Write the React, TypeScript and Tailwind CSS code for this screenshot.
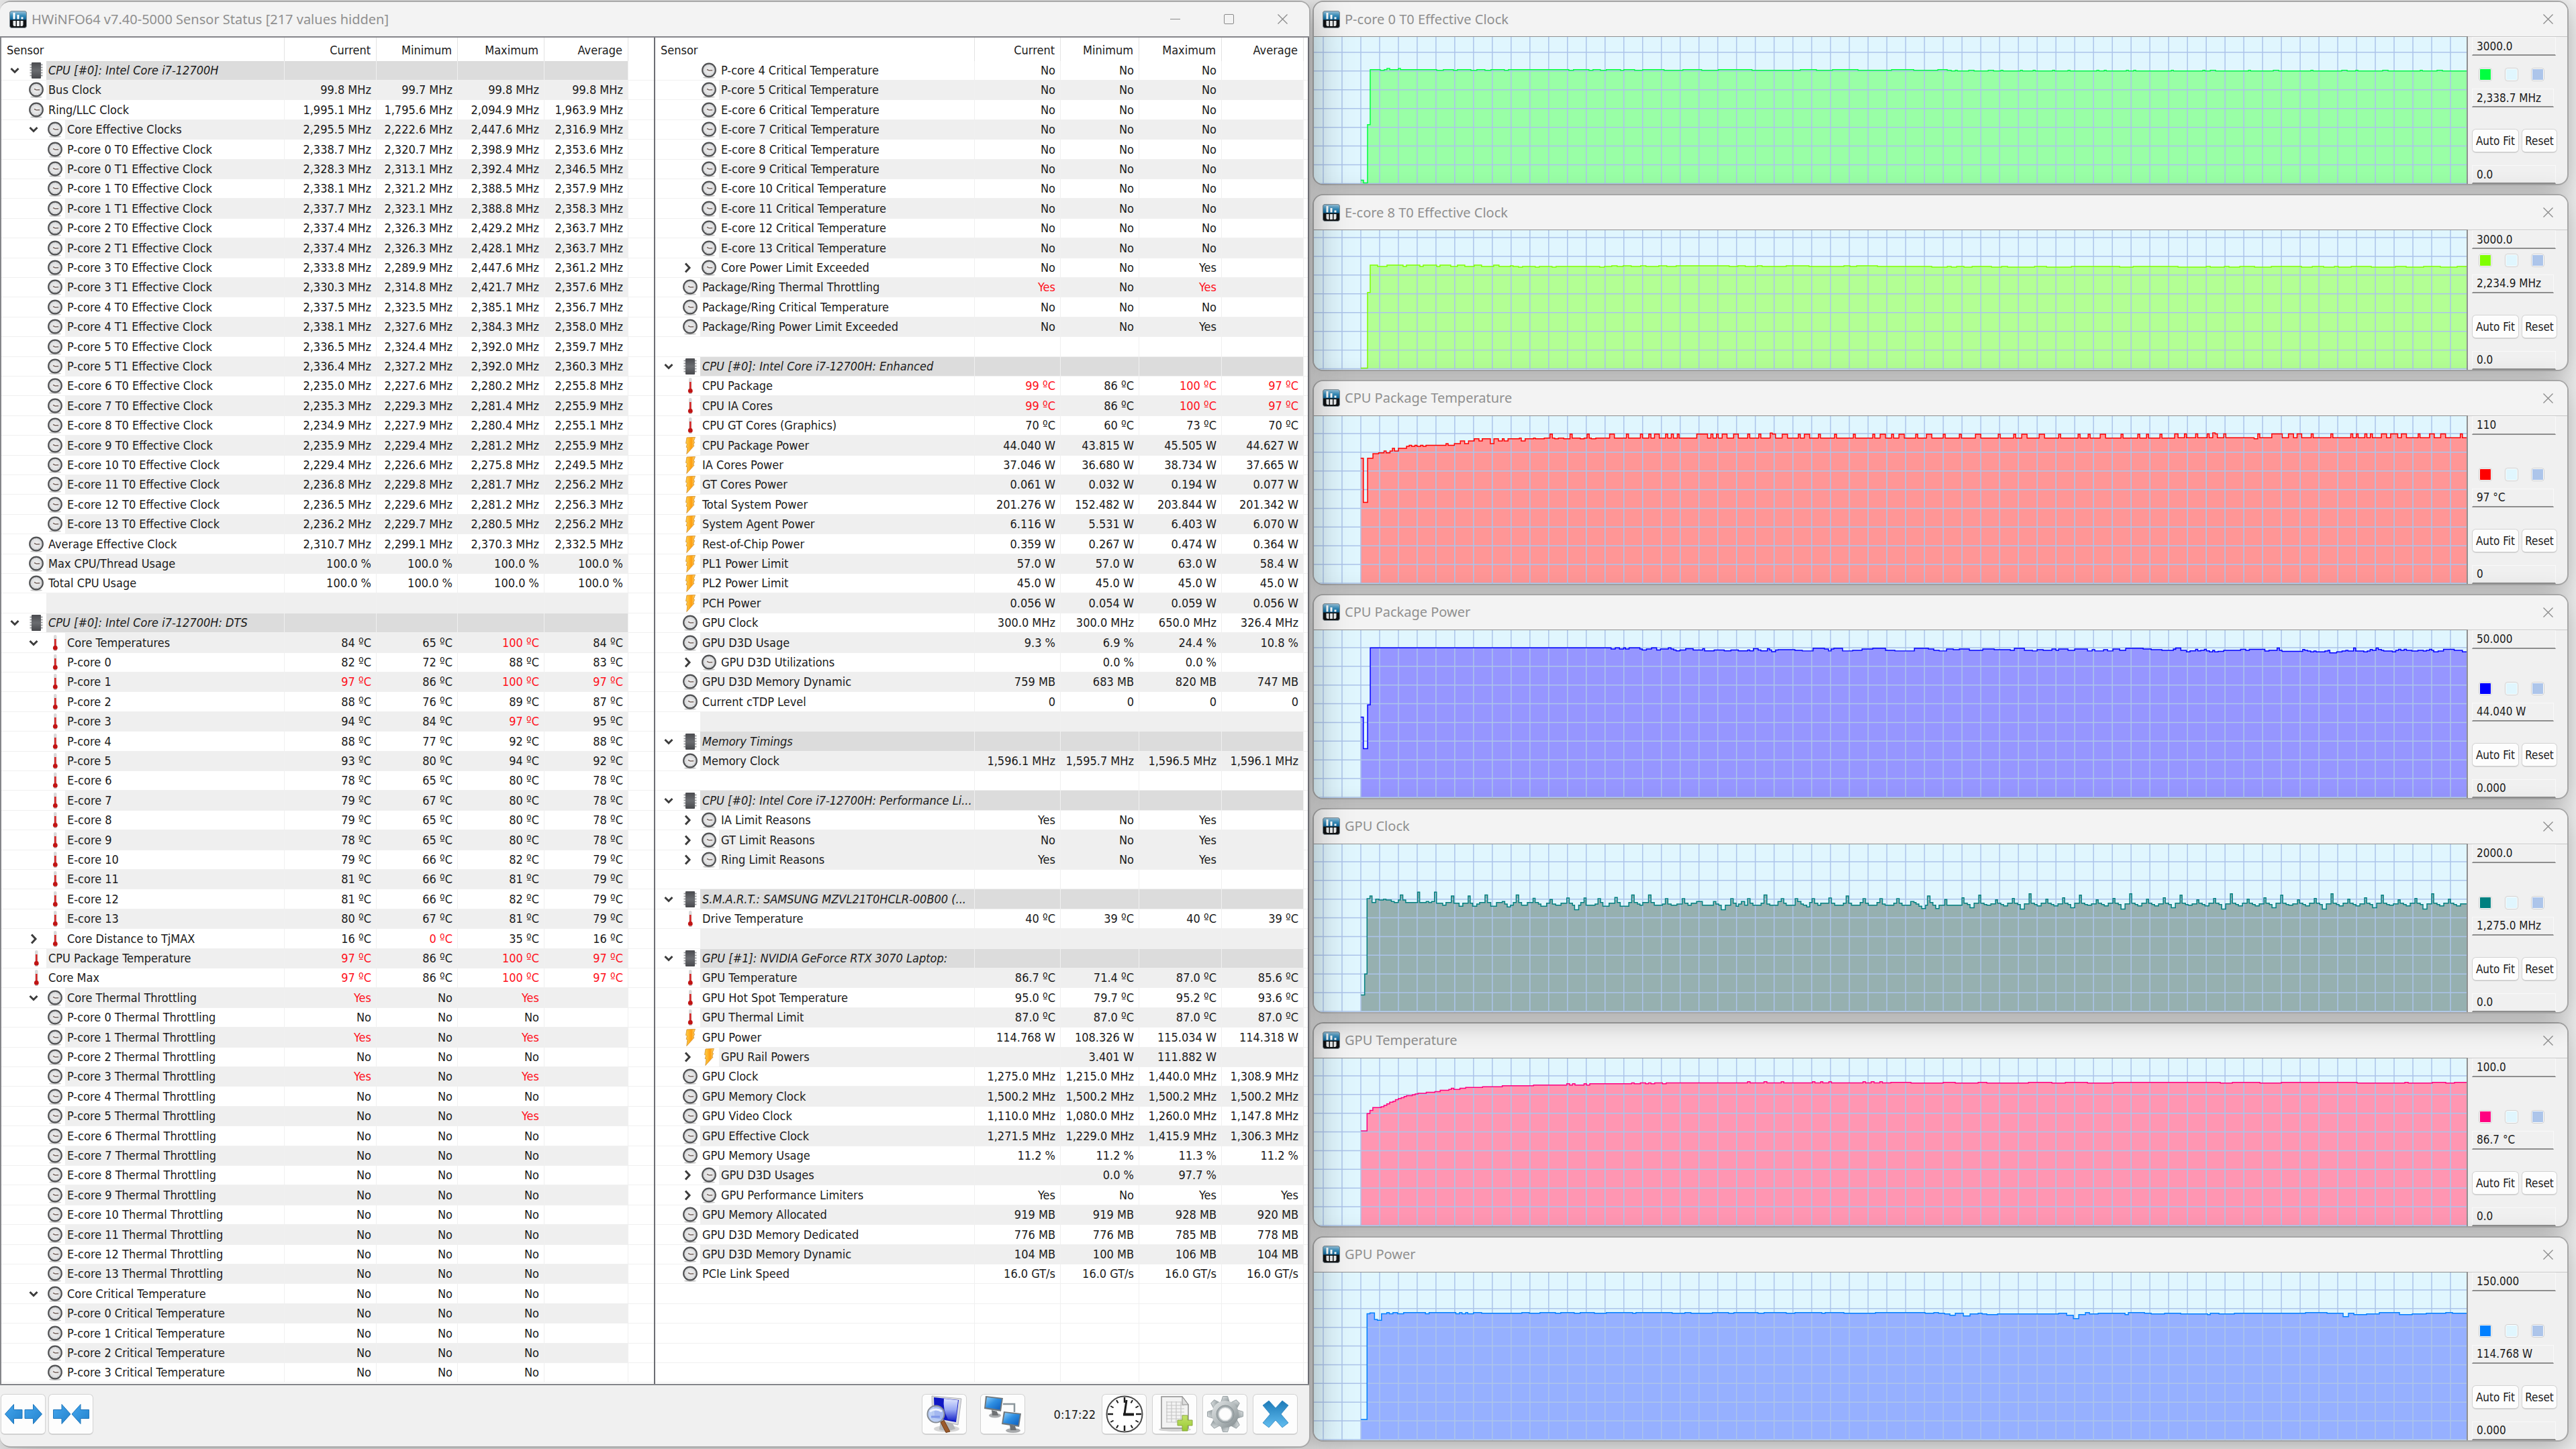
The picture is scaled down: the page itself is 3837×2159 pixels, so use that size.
import React from "react";

/* ------------------------------------------------------------------ data */

/* Row format: level, icon, expander | label | current | minimum | maximum | average
   icon: c = clock, t = thermometer, p = power, h = section header
   expander: v = open, > = closed, - = none; a leading "!" marks an alarm value */
const LEFT_ROWS = `
0hv|CPU [#0]: Intel Core i7-12700H
1c-|Bus Clock|99.8 MHz|99.7 MHz|99.8 MHz|99.8 MHz
1c-|Ring/LLC Clock|1,995.1 MHz|1,795.6 MHz|2,094.9 MHz|1,963.9 MHz
2cv|Core Effective Clocks|2,295.5 MHz|2,222.6 MHz|2,447.6 MHz|2,316.9 MHz
2c-|P-core 0 T0 Effective Clock|2,338.7 MHz|2,320.7 MHz|2,398.9 MHz|2,353.6 MHz
2c-|P-core 0 T1 Effective Clock|2,328.3 MHz|2,313.1 MHz|2,392.4 MHz|2,346.5 MHz
2c-|P-core 1 T0 Effective Clock|2,338.1 MHz|2,321.2 MHz|2,388.5 MHz|2,357.9 MHz
2c-|P-core 1 T1 Effective Clock|2,337.7 MHz|2,323.1 MHz|2,388.8 MHz|2,358.3 MHz
2c-|P-core 2 T0 Effective Clock|2,337.4 MHz|2,326.3 MHz|2,429.2 MHz|2,363.7 MHz
2c-|P-core 2 T1 Effective Clock|2,337.4 MHz|2,326.3 MHz|2,428.1 MHz|2,363.7 MHz
2c-|P-core 3 T0 Effective Clock|2,333.8 MHz|2,289.9 MHz|2,447.6 MHz|2,361.2 MHz
2c-|P-core 3 T1 Effective Clock|2,330.3 MHz|2,314.8 MHz|2,421.7 MHz|2,357.6 MHz
2c-|P-core 4 T0 Effective Clock|2,337.5 MHz|2,323.5 MHz|2,385.1 MHz|2,356.7 MHz
2c-|P-core 4 T1 Effective Clock|2,338.1 MHz|2,327.6 MHz|2,384.3 MHz|2,358.0 MHz
2c-|P-core 5 T0 Effective Clock|2,336.5 MHz|2,324.4 MHz|2,392.0 MHz|2,359.7 MHz
2c-|P-core 5 T1 Effective Clock|2,336.4 MHz|2,327.2 MHz|2,392.0 MHz|2,360.3 MHz
2c-|E-core 6 T0 Effective Clock|2,235.0 MHz|2,227.6 MHz|2,280.2 MHz|2,255.8 MHz
2c-|E-core 7 T0 Effective Clock|2,235.3 MHz|2,229.3 MHz|2,281.4 MHz|2,255.9 MHz
2c-|E-core 8 T0 Effective Clock|2,234.9 MHz|2,227.9 MHz|2,280.4 MHz|2,255.1 MHz
2c-|E-core 9 T0 Effective Clock|2,235.9 MHz|2,229.4 MHz|2,281.2 MHz|2,255.9 MHz
2c-|E-core 10 T0 Effective Clock|2,229.4 MHz|2,226.6 MHz|2,275.8 MHz|2,249.5 MHz
2c-|E-core 11 T0 Effective Clock|2,236.8 MHz|2,229.8 MHz|2,281.7 MHz|2,256.2 MHz
2c-|E-core 12 T0 Effective Clock|2,236.5 MHz|2,229.6 MHz|2,281.2 MHz|2,256.3 MHz
2c-|E-core 13 T0 Effective Clock|2,236.2 MHz|2,229.7 MHz|2,280.5 MHz|2,256.2 MHz
1c-|Average Effective Clock|2,310.7 MHz|2,299.1 MHz|2,370.3 MHz|2,332.5 MHz
1c-|Max CPU/Thread Usage|100.0 %|100.0 %|100.0 %|100.0 %
1c-|Total CPU Usage|100.0 %|100.0 %|100.0 %|100.0 %
---
0hv|CPU [#0]: Intel Core i7-12700H: DTS
2tv|Core Temperatures|84 ºC|65 ºC|!100 ºC|84 ºC
2t-|P-core 0|82 ºC|72 ºC|88 ºC|83 ºC
2t-|P-core 1|!97 ºC|86 ºC|!100 ºC|!97 ºC
2t-|P-core 2|88 ºC|76 ºC|89 ºC|87 ºC
2t-|P-core 3|94 ºC|84 ºC|!97 ºC|95 ºC
2t-|P-core 4|88 ºC|77 ºC|92 ºC|88 ºC
2t-|P-core 5|93 ºC|80 ºC|94 ºC|92 ºC
2t-|E-core 6|78 ºC|65 ºC|80 ºC|78 ºC
2t-|E-core 7|79 ºC|67 ºC|80 ºC|78 ºC
2t-|E-core 8|79 ºC|65 ºC|80 ºC|78 ºC
2t-|E-core 9|78 ºC|65 ºC|80 ºC|78 ºC
2t-|E-core 10|79 ºC|66 ºC|82 ºC|79 ºC
2t-|E-core 11|81 ºC|66 ºC|81 ºC|79 ºC
2t-|E-core 12|81 ºC|66 ºC|82 ºC|79 ºC
2t-|E-core 13|80 ºC|67 ºC|81 ºC|79 ºC
2t>|Core Distance to TjMAX|16 ºC|!0 ºC|35 ºC|16 ºC
1t-|CPU Package Temperature|!97 ºC|86 ºC|!100 ºC|!97 ºC
1t-|Core Max|!97 ºC|86 ºC|!100 ºC|!97 ºC
2cv|Core Thermal Throttling|!Yes|No|!Yes|
2c-|P-core 0 Thermal Throttling|No|No|No|
2c-|P-core 1 Thermal Throttling|!Yes|No|!Yes|
2c-|P-core 2 Thermal Throttling|No|No|No|
2c-|P-core 3 Thermal Throttling|!Yes|No|!Yes|
2c-|P-core 4 Thermal Throttling|No|No|No|
2c-|P-core 5 Thermal Throttling|No|No|!Yes|
2c-|E-core 6 Thermal Throttling|No|No|No|
2c-|E-core 7 Thermal Throttling|No|No|No|
2c-|E-core 8 Thermal Throttling|No|No|No|
2c-|E-core 9 Thermal Throttling|No|No|No|
2c-|E-core 10 Thermal Throttling|No|No|No|
2c-|E-core 11 Thermal Throttling|No|No|No|
2c-|E-core 12 Thermal Throttling|No|No|No|
2c-|E-core 13 Thermal Throttling|No|No|No|
2cv|Core Critical Temperature|No|No|No|
2c-|P-core 0 Critical Temperature|No|No|No|
2c-|P-core 1 Critical Temperature|No|No|No|
2c-|P-core 2 Critical Temperature|No|No|No|
2c-|P-core 3 Critical Temperature|No|No|No|`;

const RIGHT_ROWS = `
2c-|P-core 4 Critical Temperature|No|No|No|
2c-|P-core 5 Critical Temperature|No|No|No|
2c-|E-core 6 Critical Temperature|No|No|No|
2c-|E-core 7 Critical Temperature|No|No|No|
2c-|E-core 8 Critical Temperature|No|No|No|
2c-|E-core 9 Critical Temperature|No|No|No|
2c-|E-core 10 Critical Temperature|No|No|No|
2c-|E-core 11 Critical Temperature|No|No|No|
2c-|E-core 12 Critical Temperature|No|No|No|
2c-|E-core 13 Critical Temperature|No|No|No|
2c>|Core Power Limit Exceeded|No|No|Yes|
1c-|Package/Ring Thermal Throttling|!Yes|No|!Yes|
1c-|Package/Ring Critical Temperature|No|No|No|
1c-|Package/Ring Power Limit Exceeded|No|No|Yes|
---
0hv|CPU [#0]: Intel Core i7-12700H: Enhanced
1t-|CPU Package|!99 ºC|86 ºC|!100 ºC|!97 ºC
1t-|CPU IA Cores|!99 ºC|86 ºC|!100 ºC|!97 ºC
1t-|CPU GT Cores (Graphics)|70 ºC|60 ºC|73 ºC|70 ºC
1p-|CPU Package Power|44.040 W|43.815 W|45.505 W|44.627 W
1p-|IA Cores Power|37.046 W|36.680 W|38.734 W|37.665 W
1p-|GT Cores Power|0.061 W|0.032 W|0.194 W|0.077 W
1p-|Total System Power|201.276 W|152.482 W|203.844 W|201.342 W
1p-|System Agent Power|6.116 W|5.531 W|6.403 W|6.070 W
1p-|Rest-of-Chip Power|0.359 W|0.267 W|0.474 W|0.364 W
1p-|PL1 Power Limit|57.0 W|57.0 W|63.0 W|58.4 W
1p-|PL2 Power Limit|45.0 W|45.0 W|45.0 W|45.0 W
1p-|PCH Power|0.056 W|0.054 W|0.059 W|0.056 W
1c-|GPU Clock|300.0 MHz|300.0 MHz|650.0 MHz|326.4 MHz
1c-|GPU D3D Usage|9.3 %|6.9 %|24.4 %|10.8 %
2c>|GPU D3D Utilizations||0.0 %|0.0 %|
1c-|GPU D3D Memory Dynamic|759 MB|683 MB|820 MB|747 MB
1c-|Current cTDP Level|0|0|0|0
---
0hv|Memory Timings
1c-|Memory Clock|1,596.1 MHz|1,595.7 MHz|1,596.5 MHz|1,596.1 MHz
---
0hv|CPU [#0]: Intel Core i7-12700H: Performance Li...
2c>|IA Limit Reasons|Yes|No|Yes|
2c>|GT Limit Reasons|No|No|Yes|
2c>|Ring Limit Reasons|Yes|No|Yes|
---
0hv|S.M.A.R.T.: SAMSUNG MZVL21T0HCLR-00B00 (...
1t-|Drive Temperature|40 ºC|39 ºC|40 ºC|39 ºC
---
0hv|GPU [#1]: NVIDIA GeForce RTX 3070 Laptop:
1t-|GPU Temperature|86.7 ºC|71.4 ºC|87.0 ºC|85.6 ºC
1t-|GPU Hot Spot Temperature|95.0 ºC|79.7 ºC|95.2 ºC|93.6 ºC
1t-|GPU Thermal Limit|87.0 ºC|87.0 ºC|87.0 ºC|87.0 ºC
1p-|GPU Power|114.768 W|108.326 W|115.034 W|114.318 W
2p>|GPU Rail Powers||3.401 W|111.882 W|
1c-|GPU Clock|1,275.0 MHz|1,215.0 MHz|1,440.0 MHz|1,308.9 MHz
1c-|GPU Memory Clock|1,500.2 MHz|1,500.2 MHz|1,500.2 MHz|1,500.2 MHz
1c-|GPU Video Clock|1,110.0 MHz|1,080.0 MHz|1,260.0 MHz|1,147.8 MHz
1c-|GPU Effective Clock|1,271.5 MHz|1,229.0 MHz|1,415.9 MHz|1,306.3 MHz
1c-|GPU Memory Usage|11.2 %|11.2 %|11.3 %|11.2 %
2c>|GPU D3D Usages||0.0 %|97.7 %|
2c>|GPU Performance Limiters|Yes|No|Yes|Yes
1c-|GPU Memory Allocated|919 MB|919 MB|928 MB|920 MB
1c-|GPU D3D Memory Dedicated|776 MB|776 MB|785 MB|778 MB
1c-|GPU D3D Memory Dynamic|104 MB|100 MB|106 MB|104 MB
1c-|PCIe Link Speed|16.0 GT/s|16.0 GT/s|16.0 GT/s|16.0 GT/s
===
===
===
===
===`;

type Row = { level: number; icon: string; expander: string; label: string; values: string[] };

function parseRows(source: string): Row[] {
  return source
    .trim()
    .split("\n")
    .map((line) => {
      if (line === "---" || line === "===")
        return { level: 1, icon: "", expander: "-", label: "", values: ["", "", "", ""] };
      const [head, label, ...rest] = line.split("|");
      return {
        level: Number(head[0]),
        icon: head[1],
        expander: head[2],
        label,
        values: [0, 1, 2, 3].map((i) => rest[i] ?? ""),
      };
    });
}

/* ----------------------------------------------------------- chart series */

type Point = [number, number];

/* "x,y x,y ..." measured in sample units, converted to plot units. */
function samples(source: string, originX: number, originY: number, unit: number): Point[] {
  return source
    .trim()
    .split(/\s+/)
    .map((pair) => {
      const [x, y] = pair.split(",").map(Number);
      return [x / unit + originX, (y - originY) / unit];
    });
}

function wander(from: number, to: number, pick: (r: number, x: number) => number, seed: number, minStep = 4, spread = 20): Point[] {
  const out: Point[] = [];
  let s = seed;
  const rnd = () => {
    s = (s * 1103515245 + 12345) % 2147483648;
    return s / 2147483648;
  };
  let x = from;
  while (x < to) {
    out.push([x, pick(rnd(), x)]);
    x += minStep + Math.floor(rnd() * spread);
  }
  return out;
}

/* Narrow pulses from a low level to a high one. */
function pulses(from: number, to: number, base: number, high: number, seed: number, gap: number): Point[] {
  const out: Point[] = [[from, base]];
  let s = seed;
  const rnd = () => {
    s = (s * 1103515245 + 12345) % 2147483648;
    return s / 2147483648;
  };
  let x = from + 6;
  while (x < to - 12) {
    const w = rnd() > 0.7 ? 8 : 3;
    out.push([x, high], [x + w, base]);
    x += w + 5 + Math.floor(rnd() * gap);
  }
  return out;
}

const PLOT_WIDTH = 1718;

const greenSeries: Point[] = [
  [70, 214], [74, 218], [80, 131], [84, 49], [99, 50], [105, 49], [109, 47], [113, 49], [126, 47], [129, 49],
  [183, 50], [193, 49], [208, 50], [214, 49], [234, 50], [243, 49], [255, 50], [264, 49], [284, 50], [290, 49],
  [380, 50], [387, 49], [410, 50], [416, 49], [427, 50], [436, 49], [457, 50], [462, 49], [478, 50],
  ...wander(490, 950, (r) => (r > 0.5 ? 49 : 50), 11, 5, 34),
  ...pulses(950, 1718, 51, 50, 5, 50),
];

const limeSeries: Point[] = [
  [70, 206], [80, 93], [84, 52], [95, 54], [109, 52], [133, 54], [138, 52], [158, 54], [163, 52], [183, 54],
  [188, 52], [204, 54], [214, 52], [225, 54], [239, 52], [250, 54], [268, 52], [276, 54], [293, 53], [297, 54],
  [305, 55], [311, 54], [330, 55], [336, 54], [355, 55], [361, 54], [426, 55], [433, 54], [444, 53], [452, 54],
  [461, 53], [473, 54], [487, 53],
  ...wander(495, 1718, (r, x) => (x > 900 ? 54 : 53) + (r > 0.5 ? 1 : 0), 31, 4, 20),
];

const redSeries: Point[] = [
  ...samples(
    `172,271 181,419 195,271 213,256 232,253 250,247 257,253 270,247 278,238 285,247 298,238 325,231 334,228 342,231
     353,228 360,231 372,228 380,231 390,228 457,222 464,228 485,222 505,213 519,222 532,213 551,206 567,213 578,206
     605,222 617,206 632,213 645,206 651,213 664,206 702,204 708,213 721,206 749,204 755,206 785,204 804,190 812,204
     820,206 832,204 850,206 871,190 878,204 905,206 918,204 928,190 935,204 942,206 957,204 1003,190 1019,204
     1059,190 1066,204 1106,190 1113,204 1134,190 1141,204 1153,190 1169,204 1190,190 1197,204 1209,190 1216,204
     1229,190 1235,204 1294,190 1330,204 1341,190 1348,204 1360,190 1366,204 1379,190 1395,204 1417,190 1433,204
     1464,190 1471,204 1501,190 1508,204 1539,187 1546,190 1557,204`,
    -7, 130, 2.24),
  ...pulses(692, 1283, 33, 27, 17, 22),
  ...samples(
    `0,223 13,238 38,223 46,238 82,223 90,238 127,223 135,238 149,219 158,223 167,238 192,223 200,238 311,242 325,223
     333,238 380,223 421,238 445,223 465,238 479,223 497,238 534,223 542,238 611,223 619,238 689,223 697,238 711,223
     718,238 744,223 752,238 766,223 774,238 809,223 829,238 845,223 873,238 887,223 907,238 953,223 960,238 997,223
     1016,238 1041,223 1060,238 1118,223 1126,238`,
    1283, 153, 2.626),
];

const blueSeries: Point[] = [
  ...samples(
    `172,1137 181,1243 195,1096 204,905 1008,909 1022,905 1036,909 1050,905 1056,909 1068,905 1104,909 1112,912
     1126,909 1143,905 1160,912 1173,909 1199,905 1208,909 1217,912 1225,915 1238,912 1257,908 1282,912 1314,908
     1320,915 1352,912 1386,915 1408,912 1433,915 1464,912 1471,915 1483,908 1499,912 1508,915 1530,908 1537,912
     1544,918 1557,912`,
    -7, 846, 2.24),
  ...wander(692, 1283, (r) => 27 + Math.floor(r * 5), 7, 4, 14),
  ...samples(
    `0,1066 4,1061 24,1070 46,1076 60,1072 82,1066 90,1072 102,1070 116,1066 124,1072 136,1076 149,1070 156,1076
     170,1074 192,1070 258,1066 278,1070 292,1066 353,1073 369,1070 401,1061 410,1070 420,1074 501,1067 509,1070
     520,1073 532,1076 545,1073 553,1076 588,1073 600,1070 607,1080 634,1076 655,1073 670,1070 678,1073 700,1061
     708,1073 740,1076 754,1073 765,1067 774,1070 788,1061 797,1067 809,1070 818,1073 852,1076 865,1070 876,1066
     885,1070 898,1066 907,1070 928,1073 952,1070 973,1073 985,1070 997,1066 1006,1070 1014,1076 1031,1073
     1052,1066 1094,1070 1126,1076`,
    1283, 991, 2.626),
];

/* Sawtooth of the boost clock: a spike followed by a decay, every 25 units. */
function sawtooth(from: number, to: number): Point[] {
  const out: Point[] = [];
  let n = 0;
  for (let x = from; x < to; x += 25) {
    const peak = [80, 76, 83, 81, 74, 82][n % 6];
    const dip = [92, 91, 95, 92, 92, 97][(n * 5 + 2) % 6];
    out.push([x, peak], [x + 3, 88], [x + 8, 90], [x + 12, dip], [x + 18, 88 + (n % 2)]);
    n += 1;
  }
  return out;
}

const tealSeries: Point[] = [
  ...samples(
    `126,462 135,411 141,227 148,220 153,236 162,228 170,230 181,228 187,230 200,234 207,236 217,230 222,218 228,230
     235,236 264,211 269,236 285,234 291,236 298,234 305,211 310,238 325,243 333,236 346,220 352,238 365,245 374,238
     387,220 392,238 398,245 408,240 415,236 428,218 434,236 442,245 456,236 470,234 476,240 482,247 490,243 497,236
     504,218 510,236 517,243 531,236 545,226 550,236 558,240 564,245 578,238 586,229 592,240 600,243 613,238 627,225
     633,238 641,243 646,254 656,243 661,236 669,225 674,243 696,240 703,227 709,236 715,245 730,238 744,224 750,236
     757,245 778,236 785,218 791,236 799,240 805,243 812,236 826,218 832,236 840,243 860,240 867,227 873,240 881,243
     895,240 908,227 914,238 922,243 930,238 943,234 957,243 984,234 990,240 997,243 1003,254 1013,243 1026,227
     1032,238 1039,245 1045,240 1052,234 1060,243 1067,227 1073,238 1080,243 1100,238 1107,218 1114,240 1121,243
     1141,234 1149,227 1155,238 1161,243 1183,227 1189,234 1197,240 1203,243 1211,247 1218,236 1224,227 1230,238
     1238,243 1245,238 1265,225 1271,238 1279,243 1300,238 1307,220 1313,238 1320,243 1341,236 1348,227 1354,238
     1361,243 1382,236 1389,227 1395,240 1402,243 1423,238 1430,227 1436,238 1443,243 1464,234 1472,236 1477,240
     1484,245 1491,251 1500,243 1505,220 1511,236 1518,243 1525,251 1533,243 1547,229 1552,243`,
    -7, 94, 1.633),
  ...sawtooth(966, 1712),
];

const pinkSeries: Point[] = [
  ...samples(
    `126,792 141,750 148,742 155,735 175,733 182,730 189,726 196,722 204,720 210,716 217,713 224,711 231,708 237,706
     251,704 258,702 265,700 285,698 306,696 319,693 340,691 346,688 352,691 367,688 381,686 422,684 470,682 546,680
     627,677 634,680 641,677 647,680 669,677 675,680 683,677 785,675 791,677 806,675 819,677 826,675 832,677 841,675
     860,677 869,675 1067,672 1073,675 1107,672 1114,675 1149,672 1155,675 1225,672 1231,675 1245,672 1250,675
     1265,672 1271,675 1348,672 1354,675 1368,672 1375,675 1389,672 1395,675`,
    -7, 615, 1.633),
  ...wander(860, 1718, (r) => (r > 0.45 ? 36 : 37), 23, 5, 40),
];

const azureSeries: Point[] = [
  ...samples(
    `126,1496 141,1238 148,1236 159,1252 166,1254 176,1238 189,1235 195,1238 204,1235 215,1238 230,1235 283,1238
     292,1235 357,1238 366,1235 372,1238 381,1235 386,1238 400,1235`,
    -7, 1137, 1.633),
  ...wander(250, 940, (r) => (r > 0.45 ? 60 : 61), 41, 4, 22),
  [940, 62], [948, 64], [956, 61], [968, 65], [978, 62], [990, 61],
  ...wander(996, 1120, (r) => 61 + Math.round(r * 2), 3, 4, 16),
  [1122, 64], [1132, 69], [1140, 63], [1150, 60],
  ...wander(1156, 1400, (r) => 60 + Math.round(r * 3), 13, 4, 22),
  ...wander(1404, 1530, (r) => 60 + Math.round(r), 19, 6, 30),
  [1534, 66], [1542, 61],
  ...wander(1550, 1718, (r) => 60 + Math.round(r * 3), 29, 4, 20),
];

type Graph = {
  id: string;
  title: string;
  max: string;
  min: string;
  value: string;
  height: number;
  size: string;
  stroke: string;
  fill: string;
  swatch: string;
  points: Point[];
};

const GRAPHS: Graph[] = [
  { id: "pcore", title: "P-core 0 T0 Effective Clock", max: "3000.0", min: "0.0", value: "2,338.7 MHz", height: 220, size: "grow-[275]", stroke: "#00ff40", fill: "#99ffa6", swatch: "bg-[#00ff40]", points: greenSeries },
  { id: "ecore", title: "E-core 8 T0 Effective Clock", max: "3000.0", min: "0.0", value: "2,234.9 MHz", height: 208, size: "grow-[263]", stroke: "#80ff00", fill: "#b3ff94", swatch: "bg-[#80ff00]", points: limeSeries },
  { id: "cputemp", title: "CPU Package Temperature", max: "110", min: "0", value: "97 °C", height: 251, size: "grow-[306]", stroke: "#ff0000", fill: "#ff9696", swatch: "bg-[#ff0000]", points: redSeries },
  { id: "cpupower", title: "CPU Package Power", max: "50.000", min: "0.000", value: "44.040 W", height: 251, size: "grow-[306]", stroke: "#0000ff", fill: "#9696ff", swatch: "bg-[#0000ff]", points: blueSeries },
  { id: "gpuclock", title: "GPU Clock", max: "2000.0", min: "0.0", value: "1,275.0 MHz", height: 251, size: "grow-[306] z-10", stroke: "#008080", fill: "#96b0b0", swatch: "bg-[#008080]", points: tealSeries },
  { id: "gputemp", title: "GPU Temperature", max: "100.0", min: "0.0", value: "86.7 °C", height: 251, size: "grow-[306]", stroke: "#ff0080", fill: "#ff96b2", swatch: "bg-[#ff0080]", points: pinkSeries },
  { id: "gpupower", title: "GPU Power", max: "150.000", min: "0.000", value: "114.768 W", height: 251, size: "grow-[306]", stroke: "#0080ff", fill: "#96b0ff", swatch: "bg-[#0080ff]", points: azureSeries },
];

/* ------------------------------------------------------------------ icons */

function Gradients() {
  return (
    <svg className="absolute h-0 w-0" aria-hidden="true">
      <defs>
        <linearGradient id="g-logo" x1="0" y1="0" x2="0" y2="1">
          <stop offset="0" stopColor="#9cc3d9" /><stop offset=".5" stopColor="#3b8fbc" /><stop offset="1" stopColor="#0b6296" />
        </linearGradient>
        <linearGradient id="g-chip" x1="0" y1="0" x2="0" y2="1">
          <stop offset="0" stopColor="#4a4b4f" /><stop offset=".5" stopColor="#6a6c70" /><stop offset="1" stopColor="#48494d" />
        </linearGradient>
        <radialGradient id="g-face"><stop offset="0" stopColor="#f2f2f2" /><stop offset="1" stopColor="#d6d7d9" /></radialGradient>
        <linearGradient id="g-bolt" x1="0" y1="0" x2="1" y2="0">
          <stop offset="0" stopColor="#ffd24a" /><stop offset=".6" stopColor="#ff9d10" /><stop offset="1" stopColor="#ffe27a" />
        </linearGradient>
        <linearGradient id="g-arrow" x1="0" y1="0" x2="1" y2="1">
          <stop offset="0" stopColor="#45a6ee" /><stop offset="1" stopColor="#2382cc" />
        </linearGradient>
        <linearGradient id="g-screen" x1="0" y1="0" x2="0" y2="1">
          <stop offset="0" stopColor="#dfe6fd" /><stop offset=".5" stopColor="#98a8f4" /><stop offset="1" stopColor="#1a26c8" />
        </linearGradient>
        <linearGradient id="g-net" x1="0" y1="0" x2="1" y2="1">
          <stop offset="0" stopColor="#8fd0fb" /><stop offset=".45" stopColor="#2f8fe2" /><stop offset="1" stopColor="#0d5cbc" />
        </linearGradient>
        <linearGradient id="g-metal" x1="0" y1="0" x2="1" y2="1">
          <stop offset="0" stopColor="#e3e6e7" /><stop offset=".5" stopColor="#b5bcbe" /><stop offset="1" stopColor="#80898c" />
        </linearGradient>
        <linearGradient id="g-cross" x1="0" y1="0" x2="0" y2="1">
          <stop offset="0" stopColor="#1c7ab8" /><stop offset="1" stopColor="#62bdf0" />
        </linearGradient>
        <linearGradient id="g-plus" x1="0" y1="0" x2="0" y2="1">
          <stop offset="0" stopColor="#c4e36b" /><stop offset="1" stopColor="#97c832" />
        </linearGradient>
      </defs>
    </svg>
  );
}

function LogoIcon() {
  return (
    <svg viewBox="0 0 26 26" className="size-[26px] shrink-0" aria-hidden="true">
      <rect x=".5" y=".5" width="25" height="25" rx="3" fill="#101214" />
      <path d="M.5 13.5V3.500a3 3 0 0 1 3-3h19a3 3 0 0 1 3 3v10z" fill="url(#g-logo)" />
      <rect x=".5" y=".5" width="25" height="25" rx="3" fill="none" stroke="#7f8b92" />
      <path d="M5.500 3h3v9.500h-3zM11.500 6h3v6.500h-3zM17.500 9.500h3v3h-3z" fill="#fff" />
      <path d="M5.500 15h4v8H8q-2.500 0-2.500-2.500zM11 15h4v8h-4zM16.500 15h4v5.500q0 2.500-2.500 2.500h-1.500z" fill="#eceeef" />
    </svg>
  );
}

function SensorIcon({ kind }: { kind: string }) {
  if (kind === "h")
    return (
      <svg viewBox="0 0 24 24" className="size-6 shrink-0" aria-hidden="true">
        <path d="M2.500 3.500h19M2.500 7.500h19M2.500 11.500h19M2.500 15.500h19M2.500 19.500h19" stroke="#9c9da0" strokeWidth="2" />
        <rect x="5" y="0" width="14" height="24" rx="1" fill="url(#g-chip)" />
      </svg>
    );
  if (kind === "c")
    return (
      <svg viewBox="0 0 24 24" className="size-6 shrink-0" aria-hidden="true">
        <ellipse cx="12" cy="22.500" rx="9" ry="1.500" fill="#c8c8c8" />
        <circle cx="12" cy="11.500" r="9.800" fill="url(#g-face)" stroke="#505153" strokeWidth="2.200" />
        <circle cx="12" cy="11.500" r="8" fill="none" stroke="#aeafb1" strokeWidth="1.200" strokeDasharray="1 3" />
        <path d="M9 10.500l3.200 1.400 5-.2" stroke="#77655f" strokeWidth="1.500" fill="none" />
      </svg>
    );
  if (kind === "t")
    return (
      <svg viewBox="0 0 24 24" className="size-6 shrink-0" aria-hidden="true">
        <rect x="10" y="0" width="4.500" height="20" rx="2" fill="#d9d9d9" />
        <rect x="11" y="6" width="2.600" height="13" fill="#d42424" />
        <circle cx="12.300" cy="19.500" r="3.400" fill="#c01414" />
        <ellipse cx="12.300" cy="23.300" rx="2.500" ry=".7" fill="#bbb" />
      </svg>
    );
  if (kind === "p")
    return (
      <svg viewBox="0 0 24 26" className="h-[26px] w-6 shrink-0" aria-hidden="true">
        <path d="M7 1L19.500 .4L17 7l1.600.5-2 4.900 1.500.6L6.800 25.500l1.200-9.700-1.900-.4 1.500-5-2-.8z" fill="url(#g-bolt)" stroke="#d08c2a" strokeWidth=".8" />
      </svg>
    );
  return null;
}

function Expander({ open, label }: { open: boolean; label: string }) {
  return (
    <button type="button" aria-expanded={open} aria-label={label} className="mr-3 flex size-4 shrink-0 items-center justify-center">
      <svg viewBox="0 0 16 16" className="size-4" fill="none" stroke="#3c3c3c" strokeWidth="3">
        <path d={open ? "M2.500 5l5.500 5.500L13.500 5" : "M5 1.500L11 8l-6 6.500"} />
      </svg>
    </button>
  );
}

function CloseGlyph() {
  return (
    <svg viewBox="0 0 15 15" className="size-[15px]" stroke="#8a8a8a" strokeWidth="1.300" aria-hidden="true">
      <path d="M.5 .5l14 14M14.500 .5l-14 14" />
    </svg>
  );
}

function ArrowsIcon({ inward }: { inward: boolean }) {
  return (
    <svg viewBox="0 0 58 32" className="h-8 w-[58px]" fill="url(#g-arrow)" stroke="#1f76bb" strokeWidth="1" aria-hidden="true">
      {inward ? (
        <>
          <path d="M2.500 9.500H15V1.500L28 16 15 30.500v-8H2.500z" />
          <path d="M55.500 9.500H43V1.500L30 16l13 14.500v-8h12.500z" />
        </>
      ) : (
        <>
          <path d="M27 9.500H14.500V1.500L1.500 16l13 14.500v-8H27z" />
          <path d="M31 9.500h12.500V1.500l13 14.500-13 14.500v-8H31z" />
        </>
      )}
    </svg>
  );
}

function MonitorSearchIcon() {
  return (
    <svg viewBox="0 0 56 56" className="size-14" aria-hidden="true">
      <ellipse cx="31" cy="50" rx="19" ry="5" fill="#d6d6d6" />
      <path d="M22 38l18 4 4 8q-12 5-24 1z" fill="#b4b6b8" />
      <path d="M9 1l44 4-5 39-38-8z" fill="#dddee1" stroke="#b1b2b6" />
      <path d="M12 3l37 4-4 33-32-6z" fill="#0f17c4" />
      <path d="M27 5l21 2.200L44.500 38 33 36q-8-15-6-31z" fill="url(#g-screen)" />
      <path d="M22 40l5-3 9 17-6 1.500z" fill="#9b5a2b" stroke="#6d3d1c" />
      <circle cx="15" cy="28" r="12.500" fill="#b5caf5" fillOpacity=".9" stroke="#878d95" strokeWidth="2" />
      <path d="M6 24q9-6 18 0" stroke="#edf3ff" strokeWidth="3" fill="none" />
      <path d="M8 32h13" stroke="#7f97e8" strokeWidth="3" fill="none" />
    </svg>
  );
}

function NetworkIcon() {
  return (
    <svg viewBox="0 0 56 56" className="size-14" aria-hidden="true">
      <path d="M28 13h17v12" fill="none" stroke="#8b969c" strokeWidth="2.500" />
      <ellipse cx="16" cy="30" rx="9" ry="3.500" fill="#a9abad" />
      <path d="M11 22l8 2 2 6h-9z" fill="#6f7173" />
      <path d="M2 1l26 3-3 20L0 20z" fill="#70777c" />
      <path d="M4 3l22 2.500-2.500 16L2 18z" fill="url(#g-net)" />
      <ellipse cx="43" cy="52.500" rx="11" ry="3.500" fill="#a9abad" />
      <path d="M38 44l8 2 2 6h-9z" fill="#6f7173" />
      <path d="M29 24l26 3-3 20-26-4z" fill="#70777c" />
      <path d="M31 26l22 2.500-2.500 16L28 41z" fill="url(#g-net)" />
    </svg>
  );
}

function ClockIcon() {
  return (
    <svg viewBox="0 0 56 56" className="size-14" fill="none" stroke="#1b1b1b" aria-hidden="true">
      <circle cx="28" cy="28" r="26.500" fill="#fff" stroke="#4a4a4a" strokeWidth="2" />
      {Array.from({ length: 12 }, (_, i) => (
        <path key={i} d={i % 3 === 0 ? "M28 3v8" : "M28 4v5"} strokeWidth={i % 3 === 0 ? 2.5 : 2} transform={`rotate(${i * 30} 28 28)`} />
      ))}
      <path d="M28 28L31 7" strokeWidth="3" />
      <path d="M26 28.500h16" strokeWidth="4" />
    </svg>
  );
}

function LogIcon() {
  return (
    <svg viewBox="0 0 56 56" className="size-14" aria-hidden="true">
      <ellipse cx="28" cy="51" rx="24" ry="3" fill="#d4d4d4" />
      <path d="M8 2h31l9 12v35H8z" fill="#f3f3f3" stroke="#8f8f8f" strokeWidth="1.500" />
      <path d="M39 2v12h9z" fill="#dedede" stroke="#8f8f8f" />
      <path d="M15 10h21M15 15h27M15 20h27M15 25h27M15 30h27M15 35h27M15 40h27M16 9v31M23 9v31M30 9v31M37 9v31" stroke="#c6c6c6" strokeWidth="1.200" />
      <path d="M39 30h8v7h7v8h-7v8h-8v-8h-7v-8h7z" fill="url(#g-plus)" stroke="#8aa93f" />
    </svg>
  );
}

function GearIcon() {
  return (
    <svg viewBox="0 0 56 56" className="size-14" aria-hidden="true">
      <g fill="url(#g-metal)" stroke="#9aa3a6" strokeWidth="1">
        {Array.from({ length: 8 }, (_, i) => (
          <path key={i} d="M21.500 11l3-9.500h7l3 9.500z" transform={`rotate(${i * 45} 28 28)`} />
        ))}
      </g>
      <circle cx="28" cy="28" r="20" fill="url(#g-metal)" />
      <circle cx="28" cy="28" r="13" fill="#a3abae" stroke="#8a9396" />
      <circle cx="28" cy="28" r="9.500" fill="#fdfdfd" stroke="#dfe2e3" strokeWidth="1.500" />
    </svg>
  );
}

function CrossIcon() {
  return (
    <svg viewBox="0 0 56 56" className="size-14" aria-hidden="true">
      <path d="M9 15l9-7 10 11L38 8l9 7-11 13 11 13-9 7-10-11-10 11-9-7 11-13z" fill="url(#g-cross)" stroke="#2a82bd" strokeWidth=".8" />
    </svg>
  );
}

/* ----------------------------------------------------------- sensor table */

function SensorTable({ rows, columns, label, shiftFrom }: { rows: Row[]; columns: string[]; label: string; shiftFrom?: number }) {
  return (
    <table aria-label={label} className="w-full table-fixed border-separate border-spacing-0 bg-white text-[18px] leading-[22px] text-[#1a1a1a]">
      <colgroup>
        <col className="w-[67px]" />
        <col className="w-7" />
        <col />
        {columns.map((c, i) => (
          <col key={i} className={c} />
        ))}
      </colgroup>
      <thead>
        <tr className="h-[35px]">
          <th colSpan={3} scope="col" className="border-r border-[#e3e3e3] pt-[2px] pl-2 text-left font-normal">Sensor</th>
          {["Current", "Minimum", "Maximum", "Average"].map((h) => (
            <th key={h} scope="col" className="border-r border-[#e3e3e3] pt-[2px] pr-2 text-right font-normal">{h}</th>
          ))}
          <td />
        </tr>
      </thead>
      <tbody>
        {rows.map((row, i) => {
          const section = row.icon === "h";
          const odd = shiftFrom !== undefined && i >= shiftFrom ? i % 2 === 0 : i % 2 === 1;
          const blankTail = i > 61 && !row.label;
          const tone = section ? "bg-[#dcdcdc]" : odd && !blankTail ? "bg-[#efefef]" : "bg-white";
          const deep = row.level === 2;
          return (
            <tr key={i} className="h-[29px] nth-[5n]:h-[30px] nth-[5n+3]:h-[30px]">
              <td colSpan={deep ? 2 : 1} className="border-b border-[#f0f0f0] p-0">
                <div className="flex items-center justify-end pr-[3px]">
                  {row.expander !== "-" && <Expander open={row.expander === "v"} label={`Toggle ${row.label}`} />}
                  <SensorIcon kind={row.icon} />
                </div>
              </td>
              <td colSpan={deep ? 1 : 2} className={`truncate border-r border-b border-[#f0f0f0] py-0 pr-0 pl-[3px] ${tone} ${section ? "italic" : ""}`}>
                {row.label}
              </td>
              {row.values.map((v, j) => (
                <td key={j} className={`border-r border-b border-[#f0f0f0] py-0 pr-[7px] pl-0 text-right whitespace-nowrap ${tone} ${v.startsWith("!") ? "text-[#ff1020]" : ""}`}>
                  {v.replace("!", "")}
                </td>
              ))}
              <td className="border-b border-[#f0f0f0] p-0" />
            </tr>
          );
        })}
      </tbody>
    </table>
  );
}

/* ----------------------------------------------------------------- panels */

function ToolButton({ label, children }: { label: string; children: React.ReactNode }) {
  return (
    <button type="button" aria-label={label} className="flex h-[61px] w-[67px] items-center justify-center rounded-md border border-b-2 border-[#d2d2d2] bg-[#fdfdfd]">
      {children}
    </button>
  );
}

function SensorWindow() {
  return (
    <main className="z-20 mt-px mb-[2px] flex min-w-0 flex-col overflow-hidden rounded-2xl border-2 border-l-0 border-[#a9a9a9] bg-[#f0f0f0] shadow-[0_10px_60px_rgba(0,0,0,0.35)]">
      <header className="flex h-[51px] shrink-0 items-center bg-[#f3f3f3] pl-[14px]">
        <LogoIcon />
        <h1 className="ml-[7px] font-['Noto_Sans',sans-serif] text-[20px] text-[#8f8f8f]">HWiNFO64 v7.40-5000 Sensor Status [217 values hidden]</h1>
        <div className="ml-auto flex h-full">
          <button type="button" aria-label="Minimize" className="flex w-20 items-center justify-center">
            <span className="h-px w-[15px] bg-[#8a8a8a]" />
          </button>
          <button type="button" aria-label="Maximize" className="flex w-20 items-center justify-center">
            <span className="size-[15px] rounded-[2px] border border-[#8a8a8a]" />
          </button>
          <button type="button" aria-label="Close" className="flex w-20 items-center justify-center">
            <CloseGlyph />
          </button>
        </div>
      </header>
      <div className="flex min-h-0 flex-1 border-y-2 border-[#85868a] bg-white">
        <section className="min-w-0 flex-1 border-l-2 border-[#85868a]">
          <SensorTable rows={parseRows(LEFT_ROWS)} columns={["w-[137px]", "w-[121px]", "w-[129px]", "w-[125px]", "w-[38px]"]} label="Processor sensors" />
        </section>
        <section className="min-w-0 flex-1 border-x-2 border-[#6c6d73]">
          <SensorTable rows={parseRows(RIGHT_ROWS)} columns={["w-[128px]", "w-[117px]", "w-[123px]", "w-[122px]", "w-[6px]"]} label="Power, memory and graphics sensors" shiftFrom={40} />
        </section>
      </div>
      <footer className="flex h-[91px] shrink-0 items-start pt-[13px] pr-[17px] pl-px">
        <div className="flex gap-1">
          <ToolButton label="Expand columns"><ArrowsIcon inward={false} /></ToolButton>
          <ToolButton label="Shrink columns"><ArrowsIcon inward /></ToolButton>
        </div>
        <div className="ml-auto flex items-center">
          <ToolButton label="Show summary"><MonitorSearchIcon /></ToolButton>
          <div className="w-5" />
          <ToolButton label="Remote sensors"><NetworkIcon /></ToolButton>
          <time className="mr-[9px] w-[105px] text-right text-[18px] leading-5 text-[#1a1a1a]">0:17:22</time>
          <div className="flex gap-2">
            <ToolButton label="Reset clock"><ClockIcon /></ToolButton>
            <ToolButton label="Start logging"><LogIcon /></ToolButton>
            <ToolButton label="Settings"><GearIcon /></ToolButton>
            <ToolButton label="Close sensors"><CrossIcon /></ToolButton>
          </div>
        </div>
      </footer>
    </main>
  );
}

function Plot({ graph }: { graph: Graph }) {
  const { points, height } = graph;
  let line = `M${points[0][0]} ${points[0][1].toFixed(1)}`;
  points.slice(1).forEach(([x, y]) => {
    line += `H${x.toFixed(1)}V${y.toFixed(1)}`;
  });
  line += `H${PLOT_WIDTH}`;
  const floor = height - 1;
  const area = `${line}V${floor}H${points[0][0]}Z`;
  let grid = "";
  for (let x = 14; x < PLOT_WIDTH; x += 28) grid += `M${x} 0V${height}`;
  for (let y = floor; y > 0; y -= 28) grid += `M0 ${y}H${PLOT_WIDTH}`;
  return (
    <svg viewBox={`0 0 ${PLOT_WIDTH} ${height}`} preserveAspectRatio="none" className="h-full w-full bg-[#e0f6fe]" role="img" aria-label={`${graph.title} history`}>
      <path d={area} fill={graph.fill} />
      <path d={grid} fill="none" stroke="#acc4ea" strokeWidth="1.500" />
      <path d={line} fill="none" stroke={graph.stroke} strokeWidth="1.500" />
    </svg>
  );
}

const FIELD = "block h-7 border border-b-2 border-[#f9f9f9] border-b-[#8e8e8e] bg-[#f0f0f0] pl-[6px] text-[17px] text-[#1a1a1a] outline-none";

function GraphWindow({ graph }: { graph: Graph }) {
  const swatches = [
    ["Graph colour", graph.swatch],
    ["Background colour", "bg-[#e0f6fe]"],
    ["Grid colour", "bg-[#adc5ea]"],
  ];
  return (
    <section className={`relative flex min-h-0 basis-0 flex-col overflow-hidden rounded-2xl border-2 border-[#a6a6a6] bg-[#f0f0f0] shadow-[0_10px_40px_rgba(0,0,0,0.3)] ${graph.size}`}>
      <header className="flex h-[51px] shrink-0 items-center bg-[#f3f3f3] pl-[13px]">
        <LogoIcon />
        <h2 className="ml-[7px] font-['Noto_Sans',sans-serif] text-[20px] text-[#8f8f8f]">{graph.title}</h2>
        <button type="button" aria-label={`Close ${graph.title}`} className="ml-auto flex h-full w-[58px] items-center justify-center">
          <CloseGlyph />
        </button>
      </header>
      <div className="flex min-h-0 flex-1">
        <div className="min-h-0 min-w-0 flex-1 border-t border-r-2 border-[#8f8f8f]">
          <Plot graph={graph} />
        </div>
        <div className="flex w-[148px] shrink-0 flex-col border-t border-[#c8c8c8] pl-[6px]">
          <input id={`${graph.id}-max`} aria-label={`${graph.title} maximum`} defaultValue={graph.max} className={`${FIELD} w-[125px]`} />
          <div className="mt-auto flex gap-[19px] pl-[10px]">
            {swatches.map(([name, color]) => (
              <button key={name} type="button" aria-label={name} className="size-5 rounded-[4px] border border-[#cfcfcf] bg-white p-px">
                <span className={`block size-full rounded-[1px] ${color}`} />
              </button>
            ))}
          </div>
          <input id={`${graph.id}-value`} aria-label={`${graph.title} value`} readOnly value={graph.value} className={`${FIELD} mt-[11px] w-[122px]`} />
          <div className="mt-8 flex gap-1 text-[17px] text-[#1a1a1a]">
            <button type="button" className="h-9 w-[70px] rounded-md border border-b-2 border-[#d2d2d2] bg-[#fdfdfd] pt-[2px] whitespace-nowrap">Auto Fit</button>
            <button type="button" className="h-9 w-[53px] rounded-md border border-b-2 border-[#d2d2d2] bg-[#fdfdfd] pt-[2px] whitespace-nowrap">Reset</button>
          </div>
          <input id={`${graph.id}-min`} aria-label={`${graph.title} minimum`} defaultValue={graph.min} className={`${FIELD} mt-[18px] w-[125px] shrink-0`} />
        </div>
      </div>
    </section>
  );
}

export default function App() {
  return (
    <div className="grid h-screen grid-cols-[1952fr_1871fr] gap-[3px] overflow-hidden bg-[#f2f2f2] pr-[11px] font-['DejaVu_Sans_Condensed','Noto_Sans',sans-serif]">
      <Gradients />
      <SensorWindow />
      <aside className="flex min-w-0 flex-col gap-[13px] pt-px pb-[11px]">
        {GRAPHS.map((g) => (
          <GraphWindow key={g.id} graph={g} />
        ))}
      </aside>
    </div>
  );
}
